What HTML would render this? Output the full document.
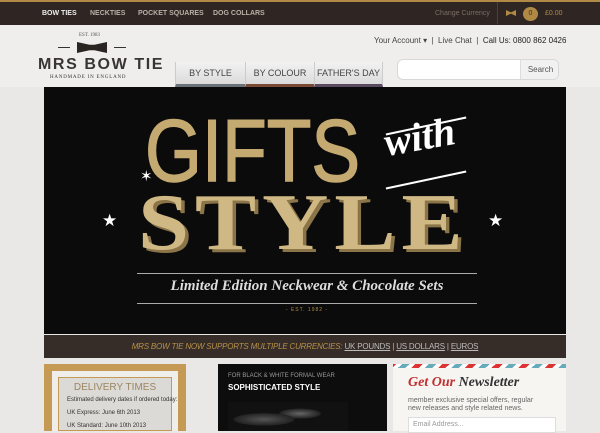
<!DOCTYPE html>
<html><head><meta charset="utf-8"><style>
*{margin:0;padding:0;box-sizing:border-box}
body{width:600px;height:431px;overflow:hidden;background:#e9e8e6;font-family:"Liberation Sans",sans-serif;position:relative}
.a{position:absolute}
.top{left:0;top:0;width:600px;height:25px;background:#2f2623;border-top:2px solid #b08a45}
.top span{position:absolute;top:8px;font-size:7px;font-weight:bold;color:#b9b0a6;white-space:nowrap}
.hdr{left:0;top:25px;width:600px;height:62px;background:#efeeec}
.tab{top:62px;height:25px;font-size:9px;color:#444;text-align:center;line-height:22px;background:linear-gradient(#f2f2f2,#dcdcdc);border-left:1px solid #ccc}
</style></head><body>
<div class="a top">
<span style="left:42px;color:#eee">BOW TIES</span>
<span style="left:90px">NECKTIES</span>
<span style="left:138px">POCKET SQUARES</span>
<span style="left:213px">DOG COLLARS</span>
<span style="left:435px;font-weight:normal;color:#7a6e64;font-size:7px">Change Currency</span>
<div class="a" style="top:0;border-left:1px solid #4a3f3a;height:22px;left:497px"></div>
<div class="a" style="left:506px;top:8px;width:10px;height:6px;background:#b08a45;clip-path:polygon(0 0,50% 40%,100% 0,100% 100%,50% 60%,0 100%)"></div>
<div class="a" style="left:523px;top:5px;width:15px;height:14px;border-radius:50%;background:#b08a45;color:#3a2f29;font-size:7px;text-align:center;line-height:14px">0</div>
<span style="left:545px;color:#b08a45;font-weight:normal">£0.00</span>
</div>
<div class="a hdr"></div>
<div class="a" style="left:79px;top:33px;font-size:5px;color:#555;font-family:'Liberation Serif',serif">EST. 1983</div>
<div class="a" style="left:58px;top:47px;width:12px;height:1px;background:#333"></div>
<div class="a" style="left:114px;top:47px;width:12px;height:1px;background:#333"></div>
<div class="a" style="left:77px;top:42px;width:30px;height:11px;background:#2a2523;clip-path:polygon(0 0,42% 25%,58% 25%,100% 0,100% 100%,58% 75%,42% 75%,0 100%)"></div>
<div class="a" style="left:38px;top:56px;font-size:16px;font-weight:bold;letter-spacing:1.6px;color:#3a3532;white-space:nowrap">MRS BOW TIE</div>
<div class="a" style="left:50px;top:75px;font-size:5px;letter-spacing:0.8px;color:#333;font-family:'Liberation Serif',serif">HANDMADE IN ENGLAND</div>
<div class="a" style="left:374px;top:36px;font-size:8px;color:#444">Your Account ▾ &nbsp;| &nbsp;Live Chat &nbsp;| &nbsp;<b style="font-weight:normal;color:#222">Call Us: 0800 862 0426</b></div>
<div class="a tab" style="left:175px;width:70px;border-bottom:3px solid #6b7378">BY STYLE</div>
<div class="a tab" style="left:245px;width:69px;border-bottom:3px solid #7a4a35">BY COLOUR</div>
<div class="a tab" style="left:314px;width:69px;border-bottom:3px solid #5a4a60;border-right:1px solid #ccc">FATHER'S DAY</div>
<div class="a" style="left:397px;top:59px;width:162px;height:21px;border-radius:6px;border:1px solid #d8d8d8;background:#fff;overflow:hidden">
<div class="a" style="left:122px;top:0;width:40px;height:21px;background:#f1f1f1;border-left:1px solid #ddd;font-size:8px;color:#555;text-align:center;line-height:20px">Search</div></div>
<div class="a" style="left:44px;top:87px;width:522px;height:247px;background:#0b0b0b;overflow:hidden">
<div class="a" style="left:101px;top:20px;font-size:88px;color:#c4aa70;font-family:'Liberation Sans',sans-serif;line-height:1;transform:scaleX(0.83);transform-origin:left;white-space:nowrap;-webkit-text-stroke:1.5px #c4aa70">GIFTS</div>
<div class="a" style="left:340px;top:30px;font-size:40px;color:#fff;font-style:italic;font-weight:bold;font-family:'Liberation Serif',serif;transform:rotate(-10deg);line-height:1">with</div>
<div class="a" style="left:341px;top:38px;width:82px;height:1.5px;background:#fff;transform:rotate(-12deg)"></div>
<div class="a" style="left:341px;top:92px;width:82px;height:1.5px;background:#fff;transform:rotate(-12deg)"></div>
<div class="a" style="left:94px;top:96px;font-size:80px;font-weight:bold;color:#cfb884;font-family:'Liberation Serif',serif;line-height:1;letter-spacing:5px;text-shadow:3px 3px 0 #8a7448;white-space:nowrap;transform:scaleX(1.15);transform-origin:left">STYLE</div>
<div class="a" style="left:58px;top:124px;color:#fff;font-size:17px">★</div>
<div class="a" style="left:444px;top:124px;color:#fff;font-size:17px">★</div>
<div class="a" style="left:96px;top:80px;color:#fff;font-size:15px">✶</div>
<div class="a" style="left:93px;top:186px;width:340px;height:1px;background:#aaa"></div>
<div class="a" style="left:93px;top:216px;width:340px;height:1px;background:#aaa"></div>
<div class="a" style="left:93px;top:191px;width:340px;text-align:center;font-size:15px;color:#ddd;font-style:italic;font-weight:bold;font-family:'Liberation Serif',serif">Limited Edition Neckwear &amp; Chocolate Sets</div>
<div class="a" style="left:93px;top:220px;width:340px;text-align:center;font-size:5px;color:#b08a45;letter-spacing:1px">- EST. 1982 -</div>
</div>
<div class="a" style="left:44px;top:335px;width:522px;height:23px;background:#362c28;text-align:center;font-size:8px;line-height:24px;color:#bbb;letter-spacing:-0.2px">
<i style="color:#b8914a">MRS BOW TIE NOW SUPPORTS MULTIPLE CURRENCIES:</i> <u>UK POUNDS</u> | <u>US DOLLARS</u> | <u>EUROS</u></div>
<div class="a" style="left:44px;top:364px;width:142px;height:67px;background:#c49a55"></div>
<div class="a" style="left:52px;top:371px;width:126px;height:60px;background:#f0eeea"></div>
<div class="a" style="left:58px;top:377px;width:114px;height:54px;background:#dcdad6;border:1px solid #c49a55"></div>
<div class="a" style="left:58px;top:382px;width:114px;text-align:center;font-size:10px;color:#9a8560">DELIVERY TIMES</div>
<div class="a" style="left:67px;top:395px;font-size:6px;color:#333;line-height:11px">Estimated delivery dates if ordered today:<br><span style="line-height:15px">UK Express: June 6th 2013</span><br>UK Standard: June 10th 2013</div>
<div class="a" style="left:218px;top:364px;width:169px;height:67px;background:#0d0d0d">
<div class="a" style="left:10px;top:9px;font-size:6px;color:#999">FOR BLACK &amp; WHITE FORMAL WEAR</div>
<div class="a" style="left:10px;top:19px;font-size:8px;color:#fff;font-weight:bold">SOPHISTICATED STYLE</div>
<div class="a" style="left:10px;top:38px;width:120px;height:29px;background:radial-gradient(ellipse at 30% 60%,#555 0,#222 25%,transparent 26%),radial-gradient(ellipse at 60% 40%,#666 0,#222 20%,transparent 21%),#111"></div>
</div>
<div class="a" style="left:393px;top:364px;width:173px;height:67px;background:#f6f5f2;border-top:4px solid transparent;border-image:repeating-linear-gradient(135deg,#d33 0 5px,#fff 5px 9px,#6ab 9px 14px,#fff 14px 18px) 4"></div>
<div class="a" style="left:408px;top:375px;font-size:14px;font-style:italic;font-family:'Liberation Serif',serif;color:#c03030;font-weight:bold">Get Our <span style="color:#333">Newsletter</span></div>
<div class="a" style="left:408px;top:397px;font-size:7px;color:#666;line-height:8px">member exclusive special offers, regular<br>new releases and style related news.</div>
<div class="a" style="left:408px;top:417px;width:148px;height:16px;background:#fff;border:1px solid #ddd;font-size:7px;color:#999;padding:3px 4px">Email Address...</div>
</body></html>
